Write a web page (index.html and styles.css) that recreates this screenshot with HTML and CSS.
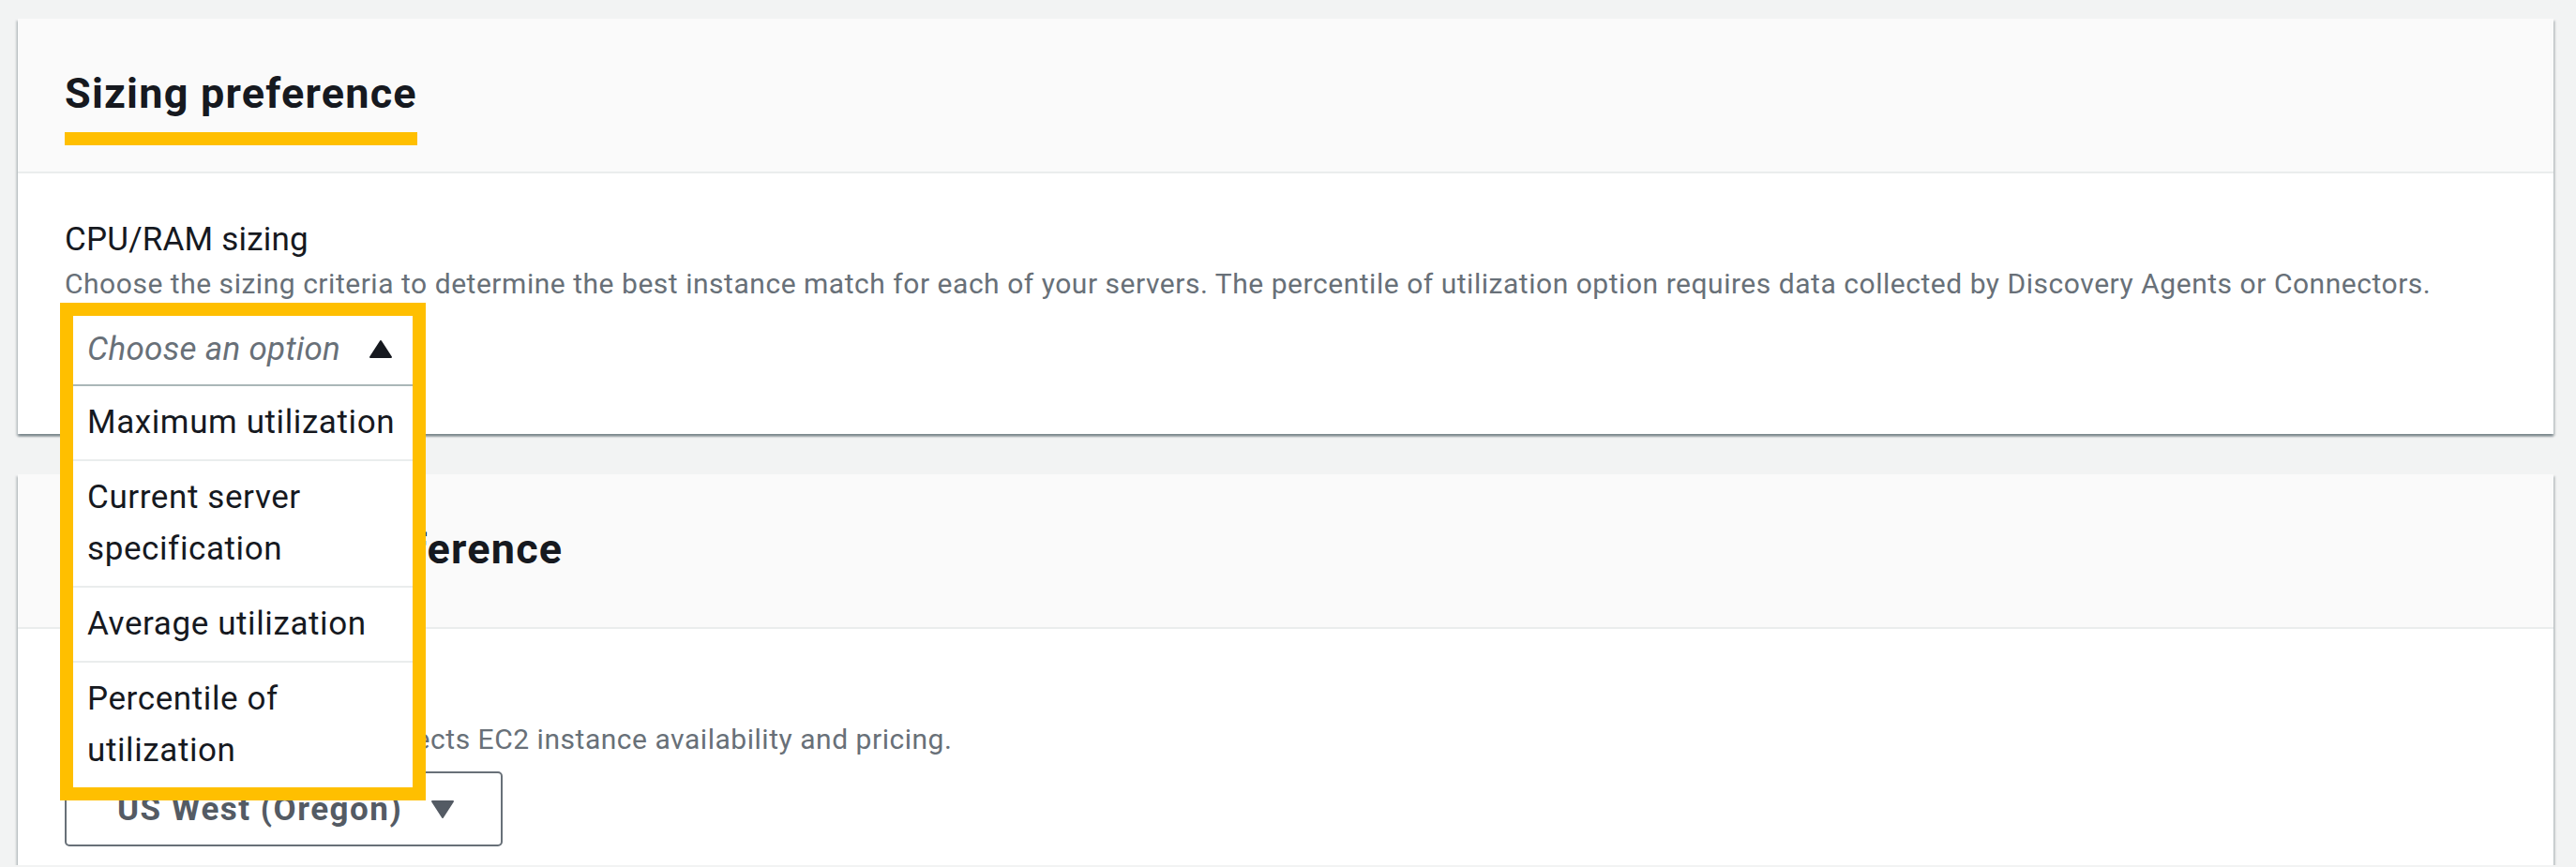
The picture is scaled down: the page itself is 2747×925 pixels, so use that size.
FILE: index.html
```html
<!DOCTYPE html>
<html lang="en">
<head>
    <meta charset="UTF-8">
    <meta name="viewport" content="width=device-width, initial-scale=1.0">
    <title>Sizing preference</title>
    <link rel="stylesheet" href="styles.css">
</head>
<body>
    <div class="page">
        <section class="card">
            <div class="card-header">
                <h2 class="card-title marked">Sizing preference</h2>
            </div>
            <div class="card-body">
                <div class="field-label">CPU/RAM sizing</div>
                <div class="field-desc">Choose the sizing criteria to determine the best instance match for each of your servers. The percentile of utilization option requires data collected by Discovery Agents or Connectors.</div>
                <div class="select-field">
                    <!-- open dropdown, highlighted -->
                    <div class="dropdown">
                        <div class="dropdown-trigger">
                            <span class="placeholder">Choose an option</span>
                            <svg class="caret" width="26" height="21" viewBox="0 0 26 21"><path d="M13 2 L24 19 H2 Z" fill="#16191f" stroke="#16191f" stroke-width="2" stroke-linejoin="round"/></svg>
                        </div>
                        <ul class="dropdown-list">
                            <li>Maximum utilization</li>
                            <li>Current server specification</li>
                            <li>Average utilization</li>
                            <li>Percentile of utilization</li>
                        </ul>
                    </div>
                </div>
            </div>
        </section>

        <section class="card">
            <div class="card-header">
                <h2 class="card-title">Instance type preference</h2>
            </div>
            <div class="card-body last">
                <div class="field-label">Region</div>
                <div class="field-desc">The AWS Region choice affects EC2 instance availability and pricing.</div>
                <div class="select-btn">
                    <span>US West (Oregon)</span>
                    <svg class="caret" width="26" height="21" viewBox="0 0 26 21"><path d="M2 2 H24 L13 19 Z" fill="#545b64" stroke="#545b64" stroke-width="2" stroke-linejoin="round"/></svg>
                </div>
            </div>
        </section>
    </div>
</body>
</html>
```

FILE: styles.css
```css
body {
    margin: 0;
    background-color: #f2f3f3;
    font-family: Roboto, "Open Sans", "Liberation Sans", sans-serif;
    color: #16191f;
}

.page {
    padding: 20px 24px 0 19px;
}

.card {
    background-color: #fff;
    box-shadow: 0 3px 2px rgba(0, 28, 36, 0.3), 2px 2px 2px rgba(0, 28, 36, 0.15), -2px 2px 2px rgba(0, 28, 36, 0.15);
}

.card + .card {
    margin-top: 43px;
}

.card-header {
    background-color: #fafafa;
    padding: 52px 50px 28px;
    border-bottom: 2px solid #eaeded;
}

.card-title {
    display: inline-block;
    margin: 0;
    font-size: 45px;
    line-height: 55px;
    font-weight: 700;
    letter-spacing: 1.2px;
    padding-bottom: 14px;
    border-bottom: 14px solid transparent;
}

.card-title.marked {
    border-bottom-color: #ffbf00;
}

.card-body {
    padding: 43px 50px 51px;
}

.card-body.last {
    padding-bottom: 20px;
}

.field-label {
    font-size: 35px;
    line-height: 55px;
    letter-spacing: 0.2px;
}

.field-desc {
    font-size: 30px;
    line-height: 40px;
    letter-spacing: 0.53px;
    color: #687078;
}

.select-field {
    position: relative;
    margin-top: 14px;
    height: 75px;
}

.dropdown {
    position: absolute;
    left: -5px;
    top: -14px;
    z-index: 10;
    width: 390px;
    box-sizing: border-box;
    border: 14px solid #ffbf00;
    background-color: #fff;
}

.dropdown-trigger {
    display: flex;
    align-items: center;
    justify-content: space-between;
    padding: 8px 21px 10px 15px;
    border-bottom: 2px solid #aab7b8;
}

.placeholder {
    font-size: 35px;
    line-height: 55px;
    font-style: italic;
    letter-spacing: 0.3px;
    color: #687078;
}

.dropdown-list {
    list-style: none;
    margin: 0;
    padding: 0;
}

.dropdown-list li {
    font-size: 35px;
    line-height: 55px;
    letter-spacing: 0.6px;
    padding: 11px 10px 12px 15px;
    border-top: 2px solid #eaeded;
}

.dropdown-list li:first-child {
    border-top: none;
}

.select-btn {
    display: flex;
    align-items: center;
    gap: 30px;
    margin-top: 14px;
    width: 467px;
    height: 80px;
    box-sizing: border-box;
    padding-left: 54px;
    border: 2px solid #687078;
    border-radius: 5px;
    font-size: 35px;
    font-weight: 700;
    letter-spacing: 1.5px;
    color: #545b64;
}
```
